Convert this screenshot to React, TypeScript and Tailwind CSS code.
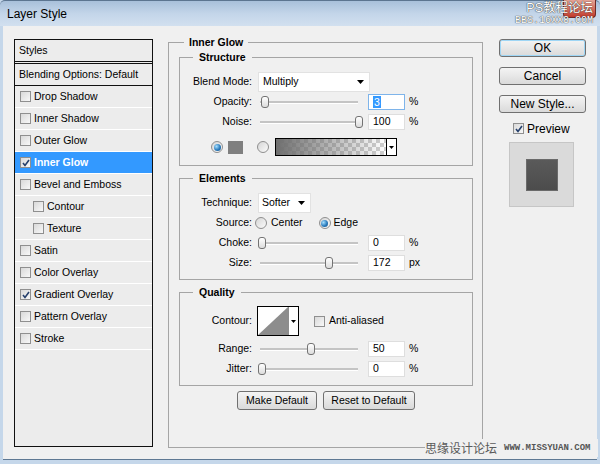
import React from "react";

const items = [
  { label: "Drop Shadow" },
  { label: "Inner Shadow" },
  { label: "Outer Glow" },
  { label: "Inner Glow", checked: true, selected: true },
  { label: "Bevel and Emboss" },
  { label: "Contour", indent: true },
  { label: "Texture", indent: true },
  { label: "Satin" },
  { label: "Color Overlay" },
  { label: "Gradient Overlay", checked: true },
  { label: "Pattern Overlay" },
  { label: "Stroke" },
];

const Arrow = () => (
  <svg width="7" height="4" viewBox="0 0 7 4" className="block">
    <path d="M0 0h7L3.5 4z" fill="#000" />
  </svg>
);

function Box({ checked = false }: { checked?: boolean }) {
  return (
    <span className="w-[11px] h-[11px] shrink-0 border border-[#8f8f8f] bg-linear-to-br from-[#d9d9d9] to-[#f8f8f8] flex items-center justify-center">
      {checked && (
        <svg width="8" height="8" viewBox="0 0 8 8" className="block">
          <path d="M1 4l2 2.5L7 1" stroke="#26406c" strokeWidth="1.6" fill="none" />
        </svg>
      )}
    </span>
  );
}

function Radio({ on = false }: { on?: boolean }) {
  return (
    <span className="w-[12px] h-[12px] shrink-0 rounded-full border border-[#8f8f8f] bg-linear-to-br from-[#d6d6d6] to-[#fbfbfb] flex items-center justify-center">
      {on && (
        <span className="w-[7px] h-[7px] rounded-full bg-[radial-gradient(circle_at_35%_35%,#a6e0ff,#2a7bbd_55%,#164f80)]" />
      )}
    </span>
  );
}

function Slider({ value, max = 100 }: { value: number; max?: number }) {
  const left = Math.round(-2 + (value / max) * 97);
  return (
    <div className="relative w-[98px] h-[14px] ml-[8px] flex items-center">
      <div className="w-full h-[3px] bg-[#c4c4c4] border-b border-white" />
      <span
        className="absolute top-[1px] w-[8px] h-[12px] rounded-[3px] border border-[#737373] bg-linear-to-b from-white to-[#dcdcdc]"
        style={{ left }}
      />
    </div>
  );
}

function Num({ value, unit, focus = false }: { value: string; unit: string; focus?: boolean }) {
  return (
    <div className="flex items-center ml-[10px]">
      <div
        className={`w-[37px] h-[16px] bg-white border flex items-center pl-[4px] ${
          focus ? "border-[#7eb4ea]" : "border-[#dedede]"
        }`}
      >
        {focus ? <span className="bg-[#3399ff] text-white px-[1px] leading-[12px]">{value}</span> : value}
      </div>
      <span className="ml-[4px]">{unit}</span>
    </div>
  );
}

function Field({ label, children, className = "" }: { label: string; children: React.ReactNode; className?: string }) {
  return (
    <div className={`flex items-center ${className}`}>
      <span className="w-[72px] text-right shrink-0">{label}</span>
      {children}
    </div>
  );
}

function Btn({ children, className = "" }: { children: React.ReactNode; className?: string }) {
  return (
    <div
      className={`flex items-center justify-center rounded-[3px] border border-[#707070] bg-linear-to-b from-[#f4f4f4] to-[#dadada] ${className}`}
    >
      {children}
    </div>
  );
}

export default function App() {
  return (
    <div className="relative w-[600px] h-[464px] overflow-hidden flex flex-col bg-[#c5d7ea] font-['Liberation_Sans',Arial,sans-serif] text-black">
      {/* title bar */}
      <div className="relative h-[26px] shrink-0 flex items-center pl-[7px] text-[12px] bg-linear-to-b from-[#a8c0da] via-[#c3d5e9] to-[#d2e0ef] rounded-t-[5px] border-t border-[#5c7590]">
        Layer Style
        <div className="absolute right-[4px] -top-px w-[33px] h-[18px] rounded-b-[4px] border border-t-0 border-[#6d2a25] bg-linear-to-b from-[#e4a497] to-[#c0392b]" />
        <div className="absolute right-[7px] top-[1px] flex flex-col items-end text-white">
          <span className="block h-[13px] leading-[13px] text-[12.5px] font-['Liberation_Sans','Noto_Sans_CJK_SC',sans-serif] [text-shadow:0_0_1px_#333,0_0_1px_#333]">
            PS教程论坛
          </span>
          <span className="block h-[11px] leading-[11px] text-[10px] font-['Liberation_Mono',monospace] [text-shadow:0_0_1px_#444,0_0_1px_#444]">
            BBS.16XX8.COM
          </span>
        </div>
      </div>

      {/* client area */}
      <div className="flex-1 mx-[3px] mb-[4px] bg-[#f0f0f0] border-b border-[#5e7893] flex items-start text-[10.5px]">
        {/* styles list */}
        <div className="ml-[11px] mt-[13px] w-[139px] h-[408px] shrink-0 border border-[#111] bg-[#ececec]">
          <div className="h-[24px] flex items-center pl-[4px] border-b-[3px] border-double border-[#111]">Styles</div>
          <div className="h-[22px] flex items-center pl-[4px] border-b border-[#111]">Blending Options: Default</div>
          {items.map((item) => (
            <div
              key={item.label}
              className={`h-[22px] flex items-center gap-[3px] border-b border-white ${
                item.indent ? "pl-[18px]" : "pl-[5px]"
              } ${item.selected ? "bg-[#3399ff] text-white font-bold" : ""}`}
            >
              <Box checked={item.checked} />
              {item.label}
            </div>
          ))}
        </div>

        {/* Inner Glow group */}
        <div className="relative ml-[15px] mt-[16px] w-[315px] h-[406px] shrink-0 border border-[#a5a5a5] pt-[14px] pl-[10px]">
          <span className="absolute -top-[7px] left-[15px] px-[5px] bg-[#f0f0f0] font-bold leading-[13px]">Inner Glow</span>

          {/* Structure */}
          <div className="relative w-[294px] border border-[#a5a5a5] pt-[14px] pb-[8px]">
            <span className="absolute -top-[7px] left-[13px] px-[6px] bg-[#f0f0f0] font-bold leading-[13px]">Structure</span>
            <Field label="Blend Mode:" className="h-[20px]">
              <div className="ml-[6px] w-[112px] h-[20px] bg-white border border-[#e2e2e2] flex items-center justify-between pl-[4px] pr-[5px]">
                Multiply
                <Arrow />
              </div>
            </Field>
            <Field label="Opacity:" className="h-[20px]">
              <Slider value={3} />
              <Num value="3" unit="%" focus />
            </Field>
            <Field label="Noise:" className="h-[20px]">
              <Slider value={100} />
              <Num value="100" unit="%" />
            </Field>
            <div className="mt-[5px] h-[20px] flex items-center pl-[31px]">
              <Radio on />
              <span className="ml-[5px] w-[15px] h-[13px] bg-[#7f7f7f]" />
              <span className="ml-[14px]">
                <Radio />
              </span>
              <div className="ml-[6px] w-[122px] h-[18px] border border-black flex">
                <div className="flex-1 bg-[repeating-conic-gradient(#cfcfcf_0%_25%,#ffffff_0%_50%)] bg-[length:8px_8px]">
                  <div className="w-full h-full bg-linear-to-r from-[#6f6f6f] to-transparent" />
                </div>
                <div className="w-[10px] bg-white border-l border-black flex items-center justify-center">
                  <svg width="5" height="3" viewBox="0 0 5 3" className="block">
                    <path d="M0 0h5L2.5 3z" fill="#000" />
                  </svg>
                </div>
              </div>
            </div>
          </div>

          {/* Elements */}
          <div className="relative mt-[12px] w-[294px] border border-[#a5a5a5] pt-[14px] pb-[6px]">
            <span className="absolute -top-[7px] left-[13px] px-[6px] bg-[#f0f0f0] font-bold leading-[13px]">Elements</span>
            <Field label="Technique:" className="h-[20px]">
              <div className="ml-[6px] w-[53px] h-[20px] bg-white border border-[#e2e2e2] flex items-center justify-between pl-[3px] pr-[5px]">
                Softer
                <Arrow />
              </div>
            </Field>
            <Field label="Source:" className="h-[20px]">
              <span className="ml-[3px]">
                <Radio />
              </span>
              <span className="ml-[4px]">Center</span>
              <span className="ml-[16px]">
                <Radio on />
              </span>
              <span className="ml-[3px]">Edge</span>
            </Field>
            <Field label="Choke:" className="h-[20px]">
              <Slider value={0} />
              <Num value="0" unit="%" />
            </Field>
            <Field label="Size:" className="h-[20px]">
              <Slider value={172} max={250} />
              <Num value="172" unit="px" />
            </Field>
          </div>

          {/* Quality */}
          <div className="relative mt-[12px] w-[294px] border border-[#a5a5a5] pt-[13px] pb-[6px]">
            <span className="absolute -top-[7px] left-[13px] px-[6px] bg-[#f0f0f0] font-bold leading-[13px]">Quality</span>
            <Field label="Contour:" className="h-[30px]">
              <div className="ml-[5px] w-[42px] h-[30px] border border-black bg-white flex">
                <svg width="30" height="28" viewBox="0 0 30 28" className="block">
                  <polygon points="0,28 30,0 30,28" fill="#8d8d8d" />
                </svg>
                <div className="flex-1 border-l border-[#8d8d8d] flex items-center justify-center">
                  <svg width="5" height="3" viewBox="0 0 5 3" className="block">
                    <path d="M0 0h5L2.5 3z" fill="#000" />
                  </svg>
                </div>
              </div>
              <span className="ml-[15px]">
                <Box />
              </span>
              <span className="ml-[4px]">Anti-aliased</span>
            </Field>
            <Field label="Range:" className="h-[20px] mt-[3px]">
              <Slider value={50} />
              <Num value="50" unit="%" />
            </Field>
            <Field label="Jitter:" className="h-[20px]">
              <Slider value={0} />
              <Num value="0" unit="%" />
            </Field>
          </div>

          <div className="mt-[5px] w-[294px] flex justify-center gap-[6px]">
            <Btn className="w-[80px] h-[19px]">Make Default</Btn>
            <Btn className="w-[92px] h-[19px]">Reset to Default</Btn>
          </div>
        </div>

        {/* right column */}
        <div className="ml-[16px] mt-[13px] w-[87px] shrink-0 flex flex-col text-[12px]">
          <Btn className="h-[18px] border-[#3c7fb1] shadow-[inset_0_0_0_1px_#9fd6f5]">OK</Btn>
          <Btn className="h-[18px] mt-[10px]">Cancel</Btn>
          <Btn className="h-[18px] mt-[10px]">New Style...</Btn>
          <div className="mt-[9px] h-[13px] flex items-center pl-[14px] gap-[3px]">
            <Box checked />
            Preview
          </div>
          <div className="mt-[7px] ml-[10px] w-[65px] h-[65px] bg-[#dadada] border border-[#c6c6c6] flex items-center justify-center">
            <div className="w-[32px] h-[32px] bg-linear-to-b from-[#5a5a5a] to-[#4c4c4c] border border-[#6a6a6a]" />
          </div>
        </div>
      </div>

      {/* bottom watermark */}
      <div className="absolute left-[425px] top-[439px] h-[18px] pr-[8px] bg-[#f0f0f0] flex items-center gap-[7px]">
        <span className="text-[12px] leading-none text-[#5a5a5a] font-['Noto_Sans_CJK_SC',sans-serif]">思缘设计论坛</span>
        <span className="text-[9px] leading-none font-bold text-[#555] font-['Liberation_Mono',monospace]">WWW.MISSYUAN.COM</span>
      </div>
    </div>
  );
}
